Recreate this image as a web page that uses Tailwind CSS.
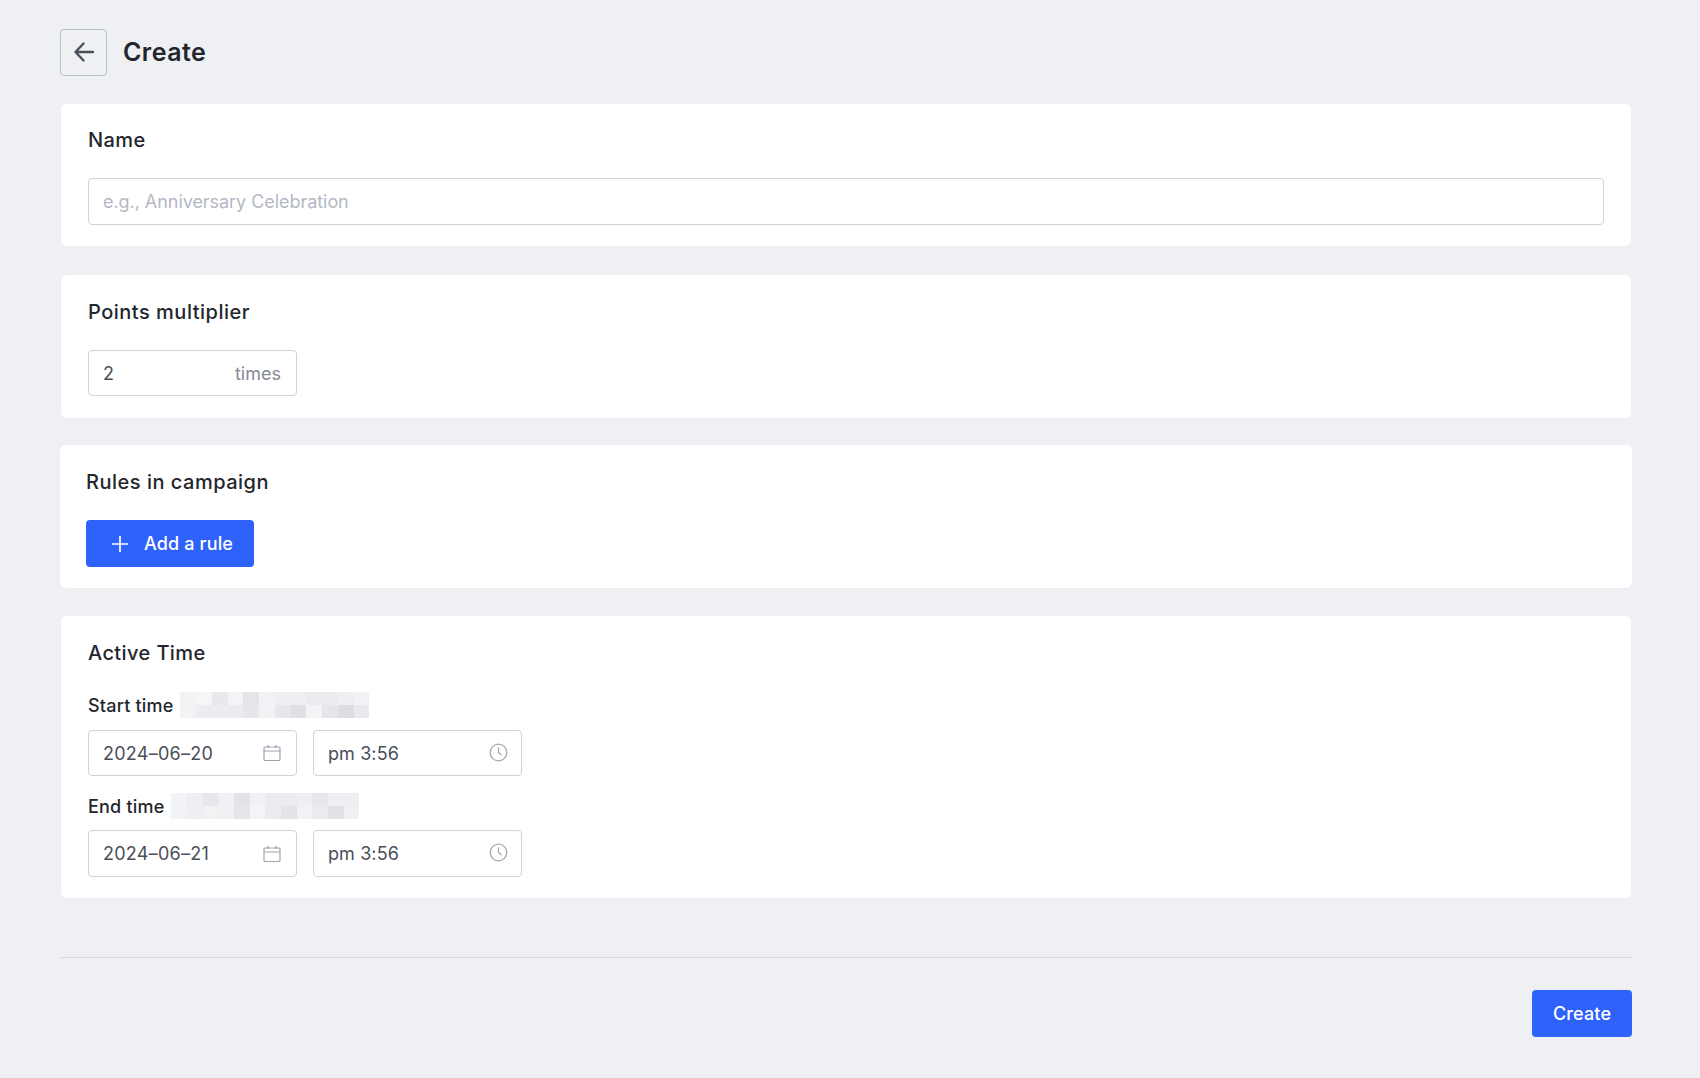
<!DOCTYPE html>
<html>
<head>
<meta charset="utf-8">
<script src="https://cdn.jsdelivr.net/npm/@tailwindcss/browser@4"></script>
</head>
<body class="bg-[#eef0f4] font-['Inter','Liberation_Sans',sans-serif] text-[#23262c] h-[1078px] overflow-hidden">
<div class="pl-[60px] pr-[68px] pt-[29px] flex flex-col">
  <div class="flex items-center gap-[16px] h-[47px]">
    <button class="w-[47px] h-[47px] rounded-[4px] border border-[#b9bdc8] flex items-center justify-center">
      <svg class="-mt-px" width="20" height="20" viewBox="0 0 20 20" fill="none" stroke="#4a4e59" stroke-width="2.4" stroke-linecap="round" stroke-linejoin="round"><path d="M19 10H1.5M9.5 1.5L1.5 10l8 8.5"/></svg>
    </button>
    <h1 class="text-[25px] font-semibold leading-none tracking-[0.45px]">Create</h1>
  </div>

  <section class="mt-[28px] mx-px h-[142px] bg-white rounded-[6px] px-[27px] pt-[22px]">
    <h2 class="text-[20px] font-medium leading-[28px] tracking-[0.4px]">Name</h2>
    <div class="mt-[24px] h-[47px] border border-[#cfd2da] rounded-[4px] pl-[14px] pr-[15px] flex items-center text-[18px] text-[#b3b8c4] tracking-[-0.05px]">e.g., Anniversary Celebration</div>
  </section>

  <section class="mt-[29px] mx-px h-[143px] bg-white rounded-[6px] px-[27px] pt-[23px]">
    <h2 class="text-[20px] font-medium leading-[28px] tracking-[0.5px]">Points multiplier</h2>
    <div class="mt-[24px] w-[209px] h-[46px] border border-[#cfd2da] rounded-[4px] pl-[14px] pr-[15px] flex items-center justify-between text-[18px]">
      <span class="text-[#4a4e59]">2</span><span class="text-[#858a96]">times</span>
    </div>
  </section>

  <section class="mt-[27px] h-[143px] bg-white rounded-[6px] px-[26px] pt-[23px]">
    <h2 class="text-[20px] font-medium leading-[28px] tracking-[0.5px]">Rules in campaign</h2>
    <button class="mt-[24px] w-[168px] h-[47px] bg-[#2f62fb] rounded-[4px] text-white text-[18px] font-medium tracking-[0.15px] flex items-center pl-[26px] gap-[16px]">
      <svg width="16" height="16" viewBox="0 0 16 16" fill="none" stroke="#fff" stroke-width="1.7"><path d="M8 0v16M0 8h16"/></svg>
      <span>Add a rule</span>
    </button>
  </section>

  <section class="mt-[28px] mx-px h-[282px] bg-white rounded-[6px] px-[27px] pt-[23px]">
    <h2 class="text-[20px] font-medium leading-[28px] tracking-[0.4px]">Active Time</h2>

    <div class="mt-[25px] h-[26px] flex items-center gap-[7px]">
      <span class="text-[18px] font-medium leading-none pt-[1px] tracking-[0.2px]">Start time</span>
      <div class="w-[189px] h-[26px] grid grid-cols-12 grid-rows-2">
        <i class="bg-[#f2f3f5]"></i><i class="bg-[#f6f6f8]"></i><i class="bg-[#e8e9ed]"></i><i class="bg-[#f4f4f6]"></i><i class="bg-[#e4e5e9]"></i><i class="bg-[#f1f2f4]"></i><i class="bg-[#eeeff2]"></i><i class="bg-[#eeeff2]"></i><i class="bg-[#ebecef]"></i><i class="bg-[#ebecef]"></i><i class="bg-[#eeeff2]"></i><i class="bg-[#f1f2f4]"></i>
        <i class="bg-[#f2f3f5]"></i><i class="bg-[#ecedf0]"></i><i class="bg-[#ecedf0]"></i><i class="bg-[#ebecef]"></i><i class="bg-[#e6e7ea]"></i><i class="bg-[#f1f2f4]"></i><i class="bg-[#e6e7ea]"></i><i class="bg-[#dfe0e5]"></i><i class="bg-[#f3f3f5]"></i><i class="bg-[#e5e6ea]"></i><i class="bg-[#dcdde2]"></i><i class="bg-[#e8e9ec]"></i>
      </div>
    </div>
    <div class="mt-[12px] flex gap-[16px]">
      <div class="w-[209px] h-[46px] border border-[#cfd2da] rounded-[4px] pl-[14px] pr-[15px] flex items-center justify-between text-[18px] text-[#4a4e59]">
        <span class="tracking-[0.25px]">2024–06–20</span>
        <svg width="18" height="18" viewBox="0 0 18 18" fill="none" stroke="#9ea3ae" stroke-width="1.2"><rect x="1" y="3" width="16" height="13.5" rx="1"/><path d="M1 7h16M5 1v3M13 1v3"/></svg>
      </div>
      <div class="w-[209px] h-[46px] border border-[#cfd2da] rounded-[4px] pl-[14px] pr-[13px] flex items-center justify-between text-[18px] text-[#4a4e59]">
        <span class="tracking-[0.1px]">pm 3:56</span>
        <svg class="-mt-[2px]" width="19" height="19" viewBox="0 0 19 19" fill="none" stroke="#a4a9b3" stroke-width="1.3"><circle cx="9.5" cy="9.5" r="8.3"/><path d="M9.5 4.5v5l3 2.5"/></svg>
      </div>
    </div>

    <div class="mt-[17px] h-[26px] flex items-center gap-[7px]">
      <span class="text-[18px] font-medium leading-none pt-[1px] tracking-[0.2px]">End time</span>
      <div class="w-[188px] h-[26px] grid grid-cols-12 grid-rows-2">
        <i class="bg-[#f2f3f5]"></i><i class="bg-[#edeef1]"></i><i class="bg-[#e6e7eb]"></i><i class="bg-[#f0f1f3]"></i><i class="bg-[#e2e3e8]"></i><i class="bg-[#f0f1f3]"></i><i class="bg-[#ebecef]"></i><i class="bg-[#ebecef]"></i><i class="bg-[#eeeff2]"></i><i class="bg-[#e7e8ec]"></i><i class="bg-[#eeeff2]"></i><i class="bg-[#eeeff2]"></i>
        <i class="bg-[#f2f3f5]"></i><i class="bg-[#eeeff2]"></i><i class="bg-[#f2f2f4]"></i><i class="bg-[#f0f1f3]"></i><i class="bg-[#e5e6ea]"></i><i class="bg-[#f4f5f6]"></i><i class="bg-[#ebecef]"></i><i class="bg-[#e3e4e8]"></i><i class="bg-[#f1f2f4]"></i><i class="bg-[#ebecef]"></i><i class="bg-[#e1e2e6]"></i><i class="bg-[#f0f1f3]"></i>
      </div>
    </div>
    <div class="mt-[11px] flex gap-[16px]">
      <div class="w-[209px] h-[47px] border border-[#cfd2da] rounded-[4px] pl-[14px] pr-[15px] flex items-center justify-between text-[18px] text-[#4a4e59]">
        <span class="tracking-[0.25px]">2024–06–21</span>
        <svg width="18" height="18" viewBox="0 0 18 18" fill="none" stroke="#9ea3ae" stroke-width="1.2"><rect x="1" y="3" width="16" height="13.5" rx="1"/><path d="M1 7h16M5 1v3M13 1v3"/></svg>
      </div>
      <div class="w-[209px] h-[47px] border border-[#cfd2da] rounded-[4px] pl-[14px] pr-[13px] flex items-center justify-between text-[18px] text-[#4a4e59]">
        <span class="tracking-[0.1px]">pm 3:56</span>
        <svg class="-mt-[2px]" width="19" height="19" viewBox="0 0 19 19" fill="none" stroke="#a4a9b3" stroke-width="1.3"><circle cx="9.5" cy="9.5" r="8.3"/><path d="M9.5 4.5v5l3 2.5"/></svg>
      </div>
    </div>
  </section>

  <div class="mt-[59px] h-[1px] bg-[#d8dae0]"></div>
  <div class="mt-[32px] flex justify-end">
    <button class="w-[100px] h-[47px] bg-[#2f62fb] rounded-[4px] text-white text-[18px] font-medium tracking-[0.15px]">Create</button>
  </div>
</div>
</body>
</html>
